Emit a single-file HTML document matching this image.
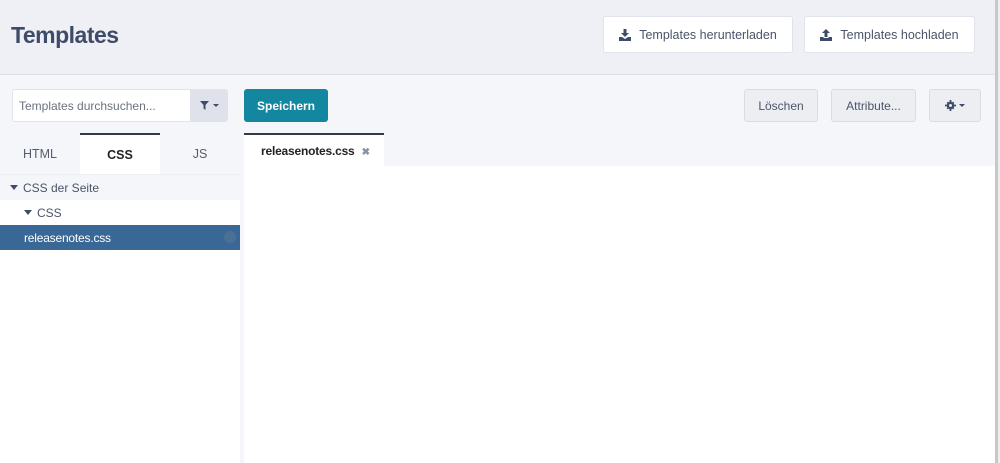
<!DOCTYPE html>
<html><head><meta charset="utf-8"><style>
*{box-sizing:border-box;margin:0;padding:0}
body{width:1000px;height:463px;overflow:hidden;background:#f5f6f9;font-family:"Liberation Sans",sans-serif;position:relative;color:#3c4657}
.a{position:absolute}
.hdr{left:0;top:0;width:1000px;height:75px;background:#eef0f5;border-bottom:1px solid #dcdfe5}
h1{position:absolute;left:11px;top:22px;font-size:23px;font-weight:bold;color:#3f4c69;letter-spacing:-0.5px}
.btn{position:absolute;background:#fff;border:1px solid #e0e3ea;border-radius:3px;font-size:12.5px;color:#4a5568;display:flex;align-items:center;justify-content:center;gap:8px}
.gbtn{position:absolute;background:#eceef2;border:1px solid #d9dce3;border-radius:3px;font-size:12px;color:#4a5568;display:flex;align-items:center;justify-content:center}
.tab{position:absolute;top:133px;height:41px;font-size:12.5px;display:flex;align-items:center;justify-content:center;color:#555e6e}
</style></head><body>
<div class="a hdr"><h1>Templates</h1></div>
<div class="btn" style="left:603px;top:16px;width:190px;height:37px">
<svg width="12" height="12" viewBox="0 0 12 12"><path d="M4.5 0h3v4h2.5L6 8 2 4h2.5z M0 8h3l3 2 3-2h3v4H0z" fill="#3f4c69"/></svg>Templates herunterladen</div>
<div class="btn" style="left:804px;top:16px;width:171px;height:37px">
<svg width="12" height="12" viewBox="0 0 12 12"><path d="M6 0l4 4H7.5v4h-3V4H2z M0 8h3.5v1h5V8H12v4H0z" fill="#3f4c69"/></svg>Templates hochladen</div>
<div class="a" style="left:12px;top:89px;width:179px;height:33px;background:#fff;border:1px solid #e0e3ea;border-radius:3px 0 0 3px;font-size:12px;color:#6b7280;padding:9px 6px">Templates durchsuchen...</div>
<div class="a" style="left:190px;top:89px;width:38px;height:33px;background:#dfe2ea;border-radius:0 3px 3px 0;display:flex;align-items:center;justify-content:center;gap:4px">
<svg width="9" height="9" viewBox="0 0 9 9"><path d="M0 0h9L5.5 4v5L3.5 7.5V4z" fill="#3f4c69"/></svg><svg width="6" height="4"><path d="M0 0h6L3 3z" fill="#3f4c69"/></svg></div>
<div class="a" style="left:244px;top:89px;width:84px;height:33px;background:#13879f;border-radius:3px;color:#fff;font-size:12px;font-weight:bold;display:flex;align-items:center;justify-content:center">Speichern</div>
<div class="gbtn" style="left:744px;top:89px;width:74px;height:33px">Löschen</div>
<div class="gbtn" style="left:831px;top:89px;width:85px;height:33px">Attribute...</div>
<div class="gbtn" style="left:929px;top:89px;width:52px;height:33px;gap:3px">
<svg width="11" height="11" viewBox="0 0 12 12"><circle cx="6" cy="6" r="4" fill="#3f4c69"/><path d="M5 0h2v12H5zM0 5h12v2H0z" fill="#3f4c69"/><path d="M1.8 3.2l1.4-1.4 7 7-1.4 1.4zM8.8 1.8l1.4 1.4-7 7-1.4-1.4z" fill="#3f4c69"/><circle cx="6" cy="6" r="1.6" fill="#eceef2"/></svg><svg width="6" height="4"><path d="M0 0h6L3 3z" fill="#3f4c69"/></svg></div>
<div class="tab" style="left:0;width:80px">HTML</div>
<div class="tab" style="left:80px;width:80px;background:#fff;border-top:2px solid #333a45;color:#222;font-weight:bold">CSS</div>
<div class="tab" style="left:160px;width:80px">JS</div>
<div class="a" style="left:0;top:174px;width:240px;height:1px;background:#eceef2"></div>
<div class="a" style="left:0;top:175px;width:240px;height:25px;font-size:12px;padding:6px 10px;color:#4a5568"><svg width="8" height="5" style="margin-right:5px;vertical-align:2px"><path d="M0 0h8L4 5z" fill="#3f4c69"/></svg>CSS der Seite</div>
<div class="a" style="left:0;top:200px;width:240px;height:263px;background:#fff"></div>
<div class="a" style="left:0;top:200px;width:240px;height:25px;font-size:12px;padding:6px 24px;color:#4a5568"><svg width="8" height="5" style="margin-right:5px;vertical-align:2px"><path d="M0 0h8L4 5z" fill="#3f4c69"/></svg>CSS</div>
<div class="a" style="left:0;top:225px;width:240px;height:25px;background:#3a6896;font-size:12px;padding:6px 24px;color:#fff;letter-spacing:-0.2px">releasenotes.css<span style="position:absolute;left:224px;top:6px;width:12px;height:12px;border-radius:6px;background:#4a7095"></span></div>
<div class="a" style="left:244px;top:166px;width:751px;height:297px;background:#fff"></div>
<div class="a" style="left:244px;top:133px;width:140px;height:34px;background:#fff;border-top:2px solid #333a45;font-size:12px;font-weight:bold;color:#222;padding:9px 0 0 17px;white-space:nowrap;letter-spacing:-0.2px">releasenotes.css <span style="color:#8a93a6;font-size:10px;margin-left:4px">✖</span></div>
<div class="a" style="left:995px;top:0;width:3px;height:463px;background:#c8c8c8"></div>
<div class="a" style="left:998px;top:0;width:2px;height:463px;background:#eee"></div>
</body></html>
